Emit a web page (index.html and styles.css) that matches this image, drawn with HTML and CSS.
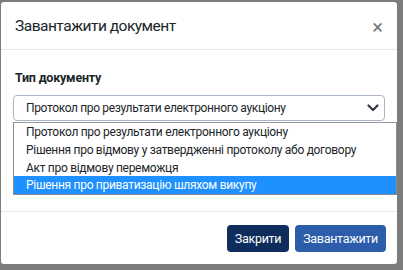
FILE: index.html
```html
<!DOCTYPE html>
<html lang="uk">
<head>
<meta charset="utf-8">
<link rel="stylesheet" href="styles.css">
</head>
<body>
<div class="modal">
  <div class="modal-header">
    <h5 class="modal-title">Завантажити документ</h5>
    <span class="close">&times;</span>
  </div>
  <div class="modal-body">
    <div class="label">Тип документу</div>
    <div class="select">
      <span>Протокол про результати електронного аукціону</span>
      <svg class="chevron" width="12" height="8" viewBox="0 0 12 8"><path d="M1.5 1.5 L6 6 L10.5 1.5" fill="none" stroke="#343a40" stroke-width="2.2" stroke-linecap="round" stroke-linejoin="round"/></svg>
    </div>
    <ul class="options">
      <li>Протокол про результати електронного аукціону</li>
      <li>Рішення про відмову у затвердженні протоколу або договору</li>
      <li>Акт про відмову переможця</li>
      <li class="active">Рішення про приватизацію шляхом викупу</li>
    </ul>
  </div>
  <div class="modal-footer">
    <button class="btn btn-dark">Закрити</button>
    <button class="btn btn-primary">Завантажити</button>
  </div>
</div>
</body>
</html>
```
FILE: styles.css
```css
html, body {
  margin: 0;
  padding: 0;
  background: #7d7d7d;
  font-family: Roboto, "Noto Sans", sans-serif;
  color: #212529;
}
.modal {
  margin: 2px 0 0 1px;
  width: 396px;
  height: 262px;
  background: #fff;
  border-radius: 3px;
  display: flex;
  flex-direction: column;
  overflow: hidden;
}
.modal-header {
  height: 47px;
  border-bottom: 1px solid #e6e6e6;
  display: flex;
  align-items: center;
  justify-content: space-between;
  padding: 0 14px 0 13px;
  box-sizing: content-box;
}
.modal-title {
  margin: 0 0 0 1px;
  font-size: 15.5px;
  font-weight: 400;
  letter-spacing: -0.5px;
}
.close {
  font-size: 20px;
  color: #777;
  line-height: 1;
  margin-top: 2px;
}
.modal-body {
  flex: 1;
  padding: 20px 0 0 12px;
}
.label {
  font-size: 12.5px;
  font-weight: 700;
  line-height: 16px;
  margin-left: 2px;
  letter-spacing: -0.2px;
}
.select {
  margin-top: 9px;
  width: 372px;
  height: 26px;
  box-sizing: border-box;
  border: 1px solid #aab6c6;
  border-radius: 4px;
  display: flex;
  align-items: center;
  justify-content: space-between;
  padding: 0 5px 0 12px;
  font-size: 12px;
  letter-spacing: -0.35px;
}
.chevron {
  display: block;
}
.options {
  list-style: none;
  margin: 1px 0 0 0;
  padding: 0;
  width: 384px;
  border: 1px solid #8a8a8a;
  border-top: 1px solid #999;
  box-sizing: border-box;
}
.options li {
  height: 18px;
  line-height: 18px;
  font-size: 12px;
  letter-spacing: -0.3px;
  padding-left: 12px;
  white-space: nowrap;
}
.options li:last-child {
  margin-top: -1px;
}
.options li.active {
  background: #1e90ff;
  color: #fff;
}
.modal-footer {
  height: 52px;
  border-top: 1px solid #e6e6e6;
  display: flex;
  align-items: center;
  justify-content: flex-end;
  gap: 6px;
  padding-right: 11px;
}
.btn {
  height: 27px;
  border: none;
  border-radius: 4px;
  color: #fff;
  font-family: Roboto, "Noto Sans", sans-serif;
  font-size: 12.5px;
  letter-spacing: -0.3px;
  padding: 0 8px;
  margin-top: 1px;
}
.btn-dark {
  background: #0f2d5c;
}
.btn-primary {
  background: #2b5dab;
}
```
